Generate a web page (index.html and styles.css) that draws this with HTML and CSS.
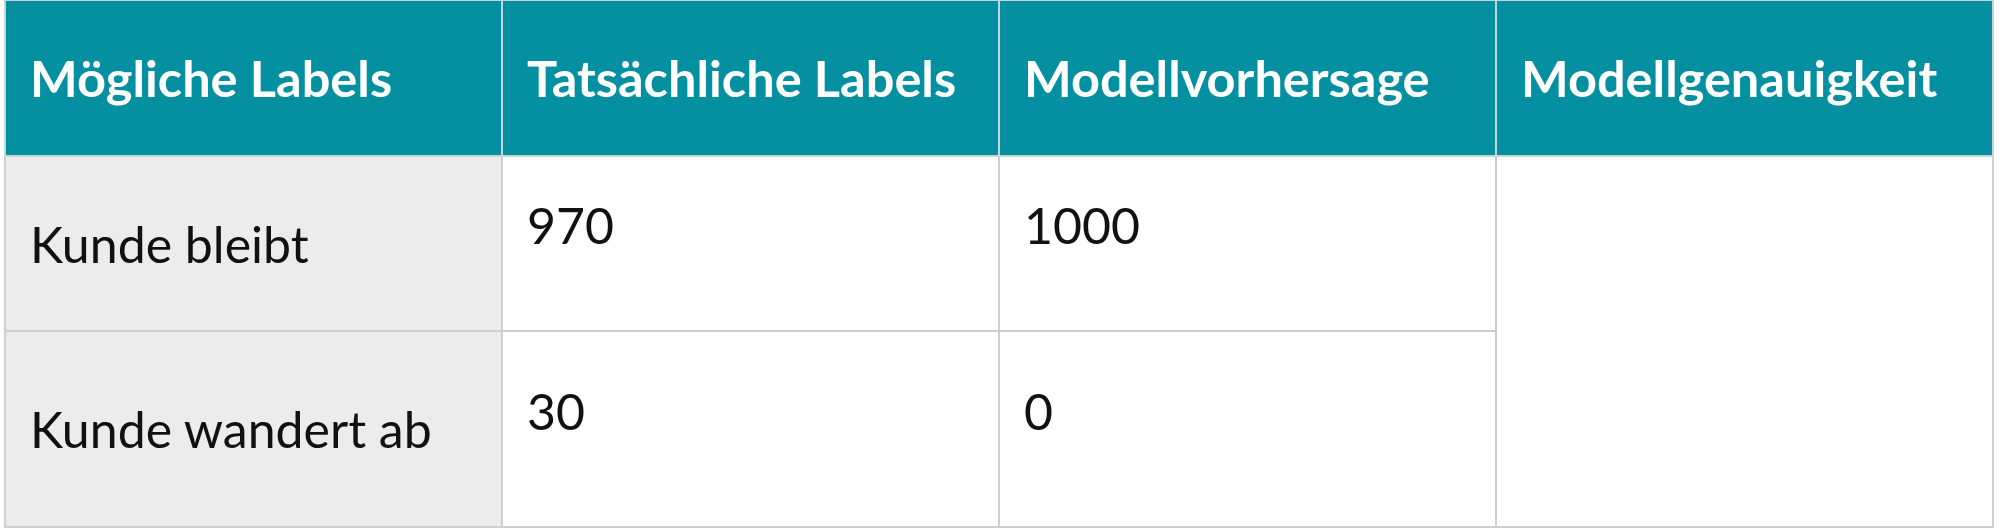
FILE: index.html
```html
<!DOCTYPE html>
<html lang="de">
<head>
<meta charset="utf-8">
<title>Modellgenauigkeit</title>
<link rel="stylesheet" href="styles.css">
</head>
<body>
<table class="grid">
  <colgroup>
    <col class="c"><col class="c"><col class="c"><col class="c">
  </colgroup>
  <thead>
    <tr class="head-row">
      <th>Mögliche Labels</th>
      <th>Tatsächliche Labels</th>
      <th>Modellvorhersage</th>
      <th>Modellgenauigkeit</th>
    </tr>
  </thead>
  <tbody>
    <tr class="row-1">
      <td class="label">Kunde bleibt</td>
      <td class="num"><span>970</span></td>
      <td class="num"><span>1000</span></td>
      <td class="empty" rowspan="2"></td>
    </tr>
    <tr class="row-2">
      <td class="label">Kunde wandert ab</td>
      <td class="num"><span>30</span></td>
      <td class="num"><span>0</span></td>
    </tr>
  </tbody>
</table>
</body>
</html>
```

FILE: styles.css
```css
html, body {
  margin: 0;
  padding: 0;
  background: #ffffff;
}

body {
  padding-left: 4px;
  font-family: Lato, "Open Sans", "Liberation Sans", sans-serif;
}

.grid {
  border-collapse: collapse;
  table-layout: fixed;
  width: 1990px;
  margin-top: -1px;
}

.grid .c {
  width: 25%;
}

.grid th,
.grid td {
  border: 2px solid #cfcfcf;
  padding: 0 24px;
  text-align: left;
  vertical-align: middle;
}

.head-row th {
  height: 154px;
  background: #0490a0;
  color: #ffffff;
  font-weight: 700;
  font-size: 50.5px;
  line-height: 1.2;
  border-color: #c5d6d8;
}

.row-1 td {
  height: 173px;
}

.row-2 td {
  height: 194px;
}

.label {
  background: #ececec;
  color: #111111;
  font-size: 50px;
  line-height: 1.2;
}

.num {
  background: #ffffff;
  color: #111111;
  font-size: 50px;
  line-height: 1.2;
}

.num span {
  display: block;
  padding-bottom: 37px;
}

.empty {
  background: #ffffff;
}
```
